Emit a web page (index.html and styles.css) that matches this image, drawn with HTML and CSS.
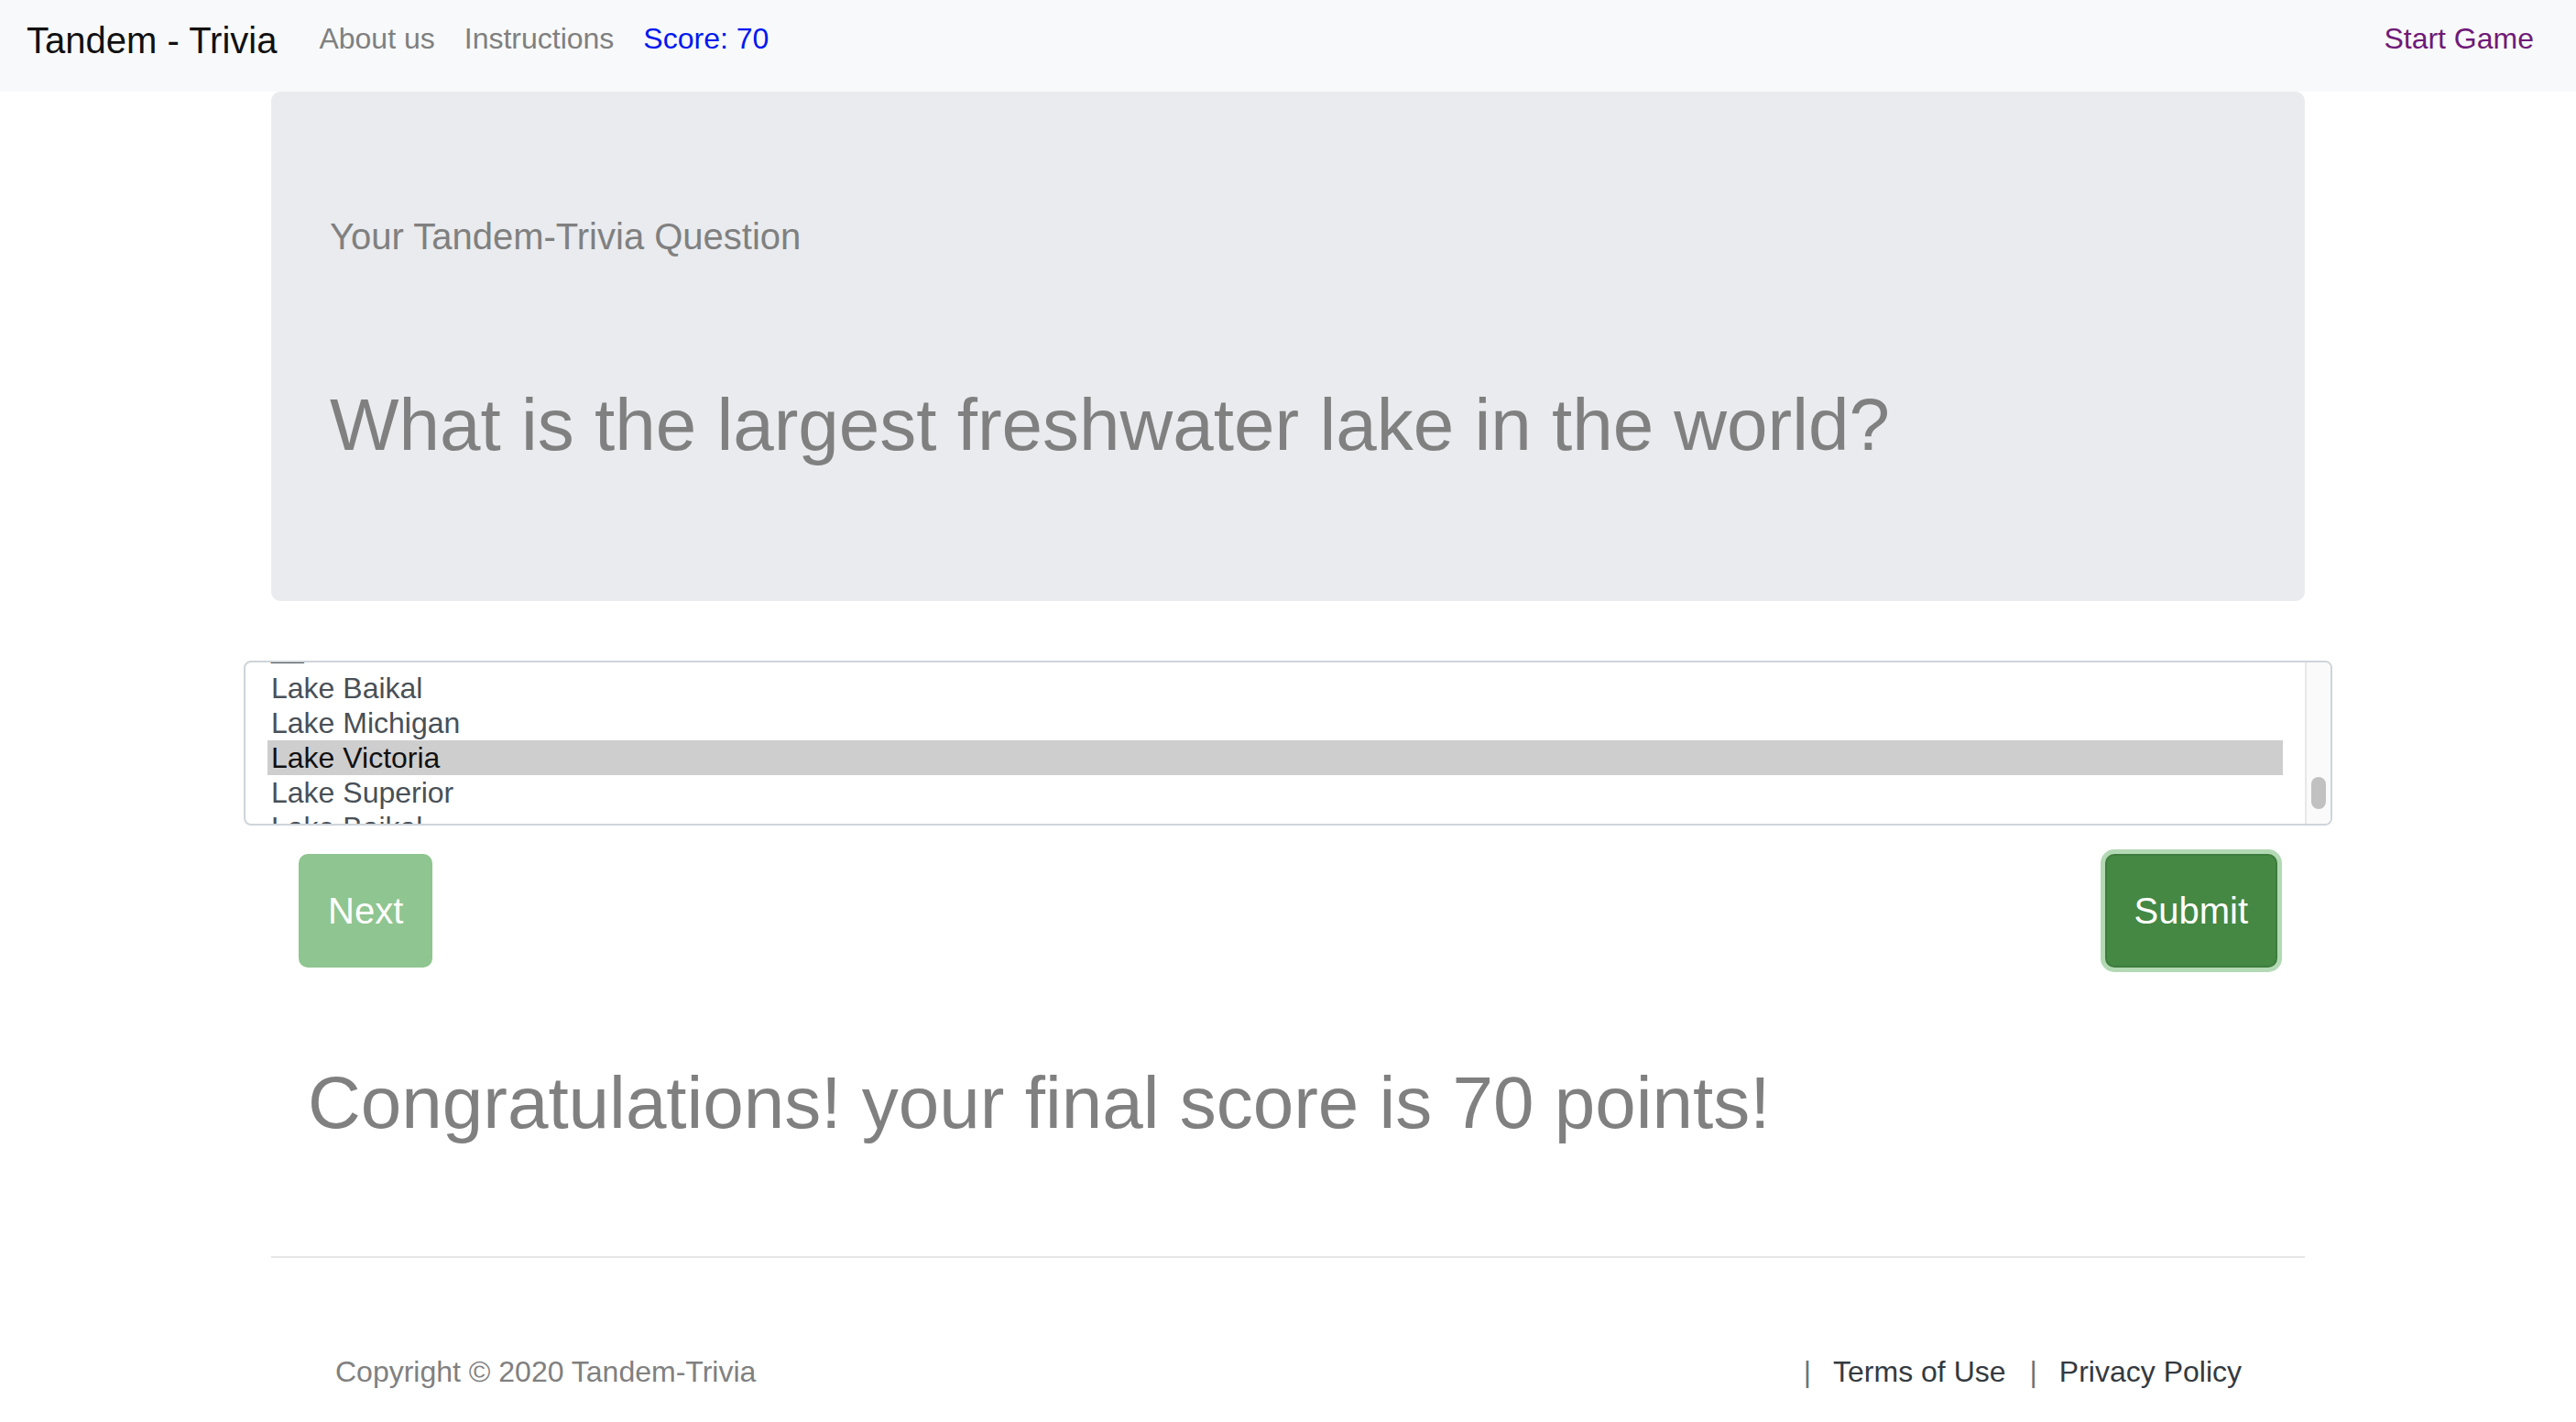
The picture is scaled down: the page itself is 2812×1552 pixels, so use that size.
FILE: index.html
```html
<!DOCTYPE html>
<html lang="en">
<head>
<meta charset="utf-8">
<title>Tandem - Trivia</title>
<link rel="stylesheet" href="styles.css">
</head>
<body>
<nav class="navbar">
  <a class="brand" href="#">Tandem - Trivia</a>
  <ul class="nav-links">
    <li><a class="nav-link" href="#">About us</a></li>
    <li><a class="nav-link" href="#">Instructions</a></li>
    <li><a class="nav-link score" href="#">Score: 70</a></li>
  </ul>
  <a class="nav-link start" href="#">Start Game</a>
</nav>

<main class="container">
  <section class="jumbotron">
    <p class="label">Your Tandem-Trivia Question</p>
    <h1 class="question">What is the largest freshwater lake in the world?</h1>
  </section>

  <div class="answers">
    <div class="listbox">
      <div class="viewport">
        <ul class="options">
          <li class="option partial">__</li>
          <li class="option">Lake Baikal</li>
          <li class="option">Lake Michigan</li>
          <li class="option selected">Lake Victoria</li>
          <li class="option">Lake Superior</li>
          <li class="option">Lake Baikal</li>
          <li class="option">Lake Michigan</li>
        </ul>
      </div>
      <div class="scrollbar"><div class="thumb"></div></div>
    </div>
  </div>

  <div class="actions">
    <button class="btn btn-next" type="button">Next</button>
    <button class="btn btn-submit" type="button">Submit</button>
  </div>

  <h1 class="result">Congratulations! your final score is 70 points!</h1>

  <hr class="divider">

  <footer class="footer">
    <span class="copyright">Copyright © 2020 Tandem-Trivia</span>
    <div class="footer-links">
      <span class="sep">|</span>
      <a class="footer-link" href="#">Terms of Use</a>
      <span class="sep">|</span>
      <a class="footer-link" href="#">Privacy Policy</a>
    </div>
  </footer>
</main>
</body>
</html>
```

FILE: styles.css
```css
* {
  box-sizing: border-box;
}

html, body {
  margin: 0;
  padding: 0;
  background: #ffffff;
  font-family: "Liberation Sans", Arial, Helvetica, sans-serif;
  color: #212529;
}

a {
  text-decoration: none;
}

/* ---------- Navbar ---------- */
.navbar {
  height: 100px;
  background: #f8f9fa;
  display: flex;
  align-items: flex-start;
  padding: 20px 30px 0 29px;
}

.brand {
  font-size: 40px;
  line-height: 48px;
  color: #111111;
  margin-right: 30px;
}

.nav-links {
  list-style: none;
  display: flex;
  margin: 2px 0 0 0;
  padding: 0;
}

.nav-link {
  display: block;
  font-size: 32px;
  line-height: 40px;
  padding: 0 16px;
  color: #7f8080;
}

.nav-link.score {
  color: #0018f0;
}

.nav-link.start {
  margin-left: auto;
  margin-top: 2px;
  color: #6f1a78;
}

/* ---------- Container ---------- */
.container {
  width: 2280px;
  margin: 0 auto;
  padding: 0 30px;
}

/* ---------- Jumbotron ---------- */
.jumbotron {
  background: #e9ebee;
  border-radius: 10px;
  padding: 134px 64px 144px 64px;
  margin-bottom: 65px;
}

.label {
  margin: 0 0 134px 0;
  font-size: 40px;
  line-height: 48px;
  color: #808080;
}

.question {
  margin: 0;
  font-size: 80px;
  line-height: 96px;
  font-weight: 400;
  color: #808080;
}

/* ---------- Answer list ---------- */
.answers {
  margin: 0 -30px;
}

.listbox {
  display: flex;
  height: 180px;
  border: 2px solid #ced4da;
  border-radius: 8px;
  overflow: hidden;
  background: #ffffff;
}

.viewport {
  flex: 1;
  padding: 0 24px;
  overflow: hidden;
}

.options {
  list-style: none;
  margin: -29px 0 0 0;
  padding: 0;
}

.option {
  height: 38px;
  line-height: 38px;
  font-size: 32px;
  padding-left: 4px;
  color: #495057;
  white-space: nowrap;
}

.option.partial {
  line-height: 26px;
}

.option.selected {
  background: #cecece;
  color: #111111;
}

.scrollbar {
  width: 28px;
  background: #fafafa;
  border-left: 2px solid #e8e8e8;
  display: flex;
  justify-content: center;
  padding-top: 125px;
}

.thumb {
  width: 16px;
  height: 35px;
  border-radius: 8px;
  background: #c1c1c1;
}

/* ---------- Buttons ---------- */
.actions {
  display: flex;
  justify-content: space-between;
  align-items: flex-start;
  padding: 0 30px;
  margin-top: 31px;
}

.btn {
  font-family: "Liberation Sans", Arial, Helvetica, sans-serif;
  font-size: 40px;
  line-height: 60px;
  padding: 30px;
  border: 2px solid transparent;
  border-radius: 10px;
  color: #ffffff;
  cursor: pointer;
}

.btn-next {
  background: #8fc590;
  border-color: #8fc590;
}

.btn-submit {
  background: #448844;
  border-color: #3d7b3d;
  box-shadow: 0 0 0 5px #b3d9b4;
}

/* ---------- Result ---------- */
.result {
  margin: 100px 0 0 0;
  padding-left: 40px;
  font-size: 80px;
  line-height: 96px;
  font-weight: 400;
  color: #808080;
}

.divider {
  margin: 119px 0 0 0;
  border: 0;
  border-top: 2px solid #e6e6e6;
  height: 0;
}

/* ---------- Footer ---------- */
.footer {
  margin-top: 100px;
  display: flex;
  justify-content: space-between;
  padding: 0 69px 0 70px;
  font-size: 32px;
  line-height: 48px;
}

.copyright {
  color: #808080;
}

.footer-links {
  display: flex;
}

.sep {
  color: #6c757d;
  margin: 0 24px 0 26px;
}

.footer-link {
  color: #343a40;
}
```
